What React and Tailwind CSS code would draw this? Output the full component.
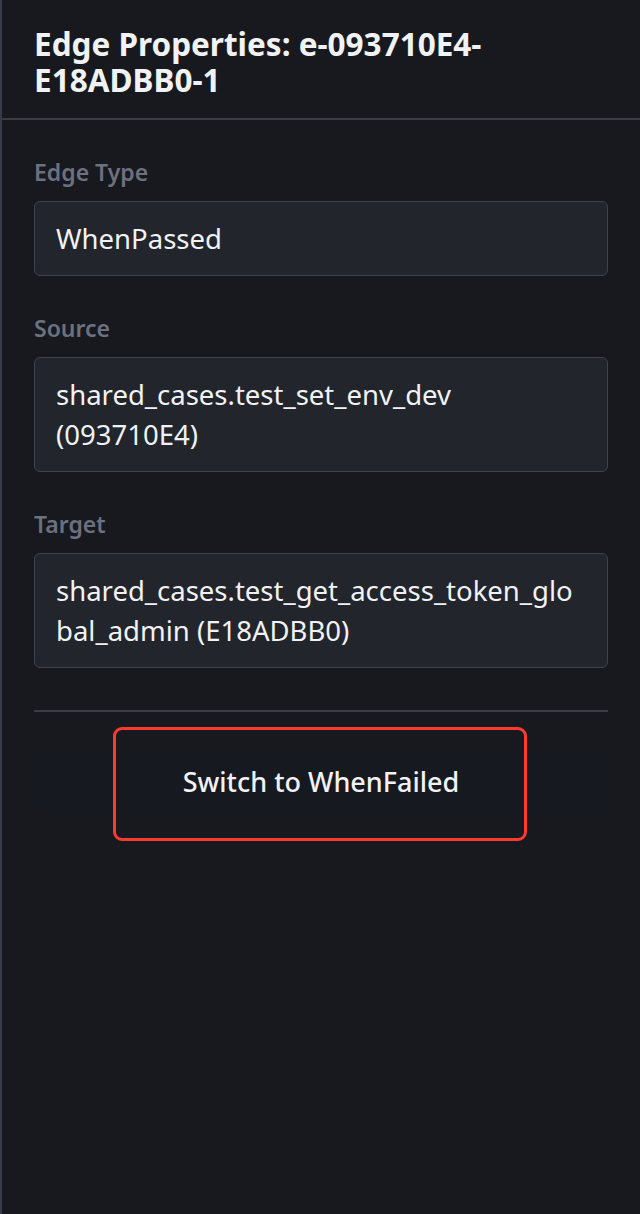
const FIELDS = [
  { label: "Edge Type", value: "WhenPassed" },
  { label: "Source", value: "shared_cases.test_set_env_dev (093710E4)" },
  { label: "Target", value: "shared_cases.test_get_access_token_global_admin (E18ADBB0)" },
];

export default function App() {
  return (
    <div
      className="min-h-[1214px] w-[640px] border-l-2 border-[#363b47] bg-[#18191e] text-[#f1f2f4]"
      style={{ fontFamily: '"Noto Sans", "Open Sans", sans-serif' }}
    >
      <div className="border-b-2 border-[#3a3d45] pl-[32px] pr-[32px] pt-[26px] pb-[20px]">
        <h2 className="text-[31.5px] font-bold leading-[36px]">Edge Properties: e-093710E4-E18ADBB0-1</h2>
      </div>

      <div className="px-[32px] pt-[38px]">
        {FIELDS.map((field) => (
          <div key={field.label} className="mb-[38px] last:mb-0">
            <label className="mb-[15px] block text-[23px] font-semibold leading-[28px] text-[#6b7180]">
              {field.label}
            </label>
            <div className="rounded-[6px] border border-[#3f4350] bg-[#22252c] px-[21px] py-[16.5px] text-[27.5px] leading-[40px] [overflow-wrap:anywhere]">
              {field.value}
            </div>
          </div>
        ))}

        <div className="mt-[42px] border-t-2 border-[#3a3d45] pt-[39px]">
          <div className="relative">
            <button className="h-[62px] w-full rounded-[6px] bg-[#161920] text-[27px] font-medium text-[#f1f2f4]">
              Switch to WhenFailed
            </button>
            {/* highlight marker */}
            <div className="pointer-events-none absolute left-[79px] top-[-24px] h-[114px] w-[414px] rounded-[9px] border-[3px] border-[#ff3b30]" />
          </div>
        </div>
      </div>
    </div>
  );
}
